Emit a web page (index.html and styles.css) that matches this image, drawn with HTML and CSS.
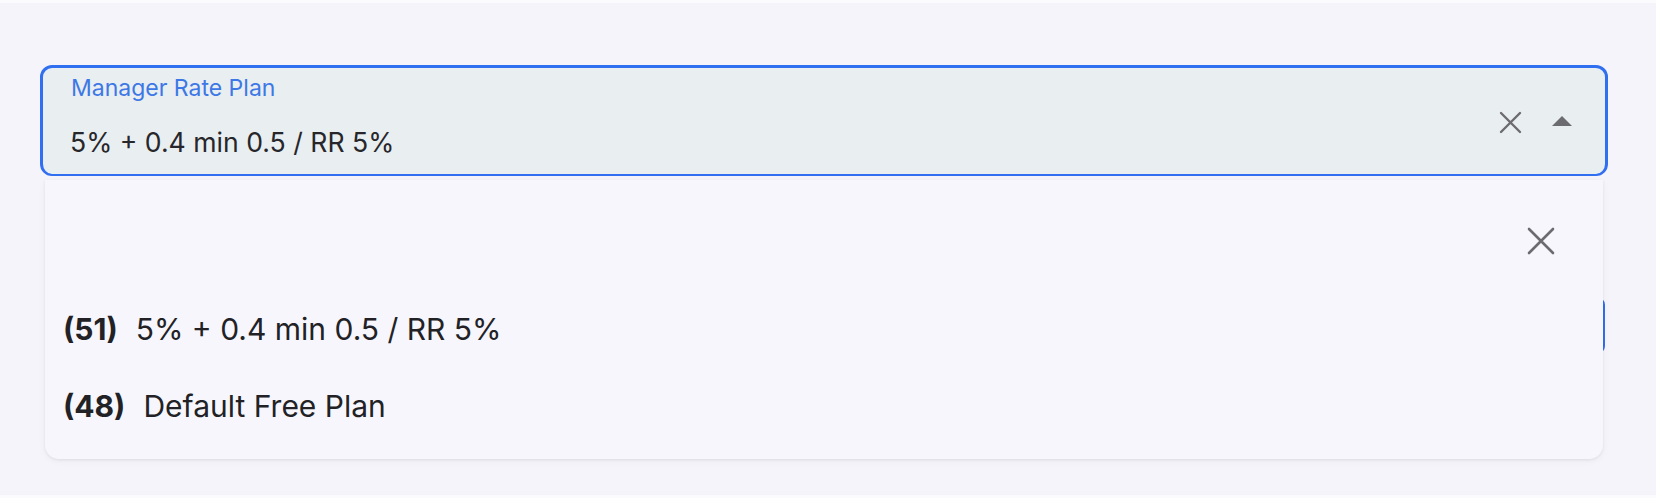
FILE: index.html
```html
<!DOCTYPE html>
<html>
<head>
<meta charset="utf-8">
<link rel="stylesheet" href="styles.css">
</head>
<body>
<div class="page">
  <div class="field-wrap">
    <div class="field">
      <div class="field-text">
        <div class="field-label">Manager Rate Plan</div>
        <div class="field-value">5% + 0.4 min 0.5 / RR 5%</div>
      </div>
      <div class="field-icons">
        <svg class="icon-clear" width="23" height="23" viewBox="0 0 23 23"><path d="M2 2 L21 21 M21 2 L2 21" stroke="#6b6b70" stroke-width="2.4" fill="none" stroke-linecap="round"/></svg>
        <svg class="icon-caret" width="20" height="10" viewBox="0 0 20 10"><path d="M10 0 L20 10 L0 10 Z" fill="#6b6b70"/></svg>
      </div>
    </div>
    <div class="menu">
      <div class="menu-head">
        <svg class="icon-close" width="28" height="28" viewBox="0 0 28 28"><path d="M2 2 L26 26 M26 2 L2 26" stroke="#6b6b70" stroke-width="2.6" fill="none" stroke-linecap="round"/></svg>
      </div>
      <ul class="options">
        <li class="option"><b class="option-id">(51)</b><span class="option-name">5% + 0.4 min 0.5 / RR 5%</span></li>
        <li class="option"><b class="option-id">(48)</b><span class="option-name">Default Free Plan</span></li>
      </ul>
    </div>
  </div>
  <div class="field-next"></div>
</div>
</body>
</html>
```

FILE: styles.css
```css
html, body {
  margin: 0;
  padding: 0;
  background: #fbfbfd;
}

body {
  font-family: Inter, "Noto Sans", "Liberation Sans", sans-serif;
  color: #222226;
}

.page {
  margin-top: 3px;
  height: 492px;
  background: #f4f4fa;
  padding: 62px 48px 0 40px;
  box-sizing: border-box;
  overflow: hidden;
}

.field-wrap {
  position: relative;
}

.field {
  box-sizing: border-box;
  height: 111px;
  border: 3px solid #306ff0;
  border-bottom-width: 2px;
  border-radius: 12px;
  background: #e9eef0;
  display: flex;
  align-items: flex-start;
  justify-content: space-between;
  padding: 0 33px 0 27px;
}

.field-text {
  display: flex;
  flex-direction: column;
  padding-top: 5px;
}

.field-label {
  font-size: 23px;
  line-height: 30px;
  color: #3d78e6;
  margin-left: 1px;
}

.field-value {
  font-size: 26.6px;
  line-height: 32px;
  margin-top: 23px;
  color: #26262b;
}

.field-icons {
  display: flex;
  align-items: center;
  gap: 30px;
  padding-top: 43px;
}

.icon-caret {
  margin-top: -4px;
}

.menu {
  position: absolute;
  top: calc(100% + 4px);
  left: 5px;
  right: 5px;
  height: 279px;
  box-sizing: border-box;
  background: #f6f6fc;
  border-radius: 0 0 14px 14px;
  box-shadow: 0 1px 3px rgba(0, 0, 0, 0.07), 0 2px 8px rgba(0, 0, 0, 0.04);
  z-index: 2;
}

.menu-head {
  display: flex;
  justify-content: flex-end;
  padding: 47px 48px 0 0;
  height: 28px;
}

.options {
  list-style: none;
  margin: 54px 0 0;
  padding: 0 0 0 18px;
  display: flex;
  flex-direction: column;
  gap: 37px;
}

.option {
  font-size: 30px;
  line-height: 40px;
  display: flex;
  gap: 18px;
  color: #222226;
}

.option-id {
  font-weight: 700;
}

.field-next {
  box-sizing: border-box;
  margin-top: 121px;
  margin-left: 40px;
  width: 1525px;
  height: 57px;
  border: 2px solid #306ff0;
  border-radius: 8px;
}
```
